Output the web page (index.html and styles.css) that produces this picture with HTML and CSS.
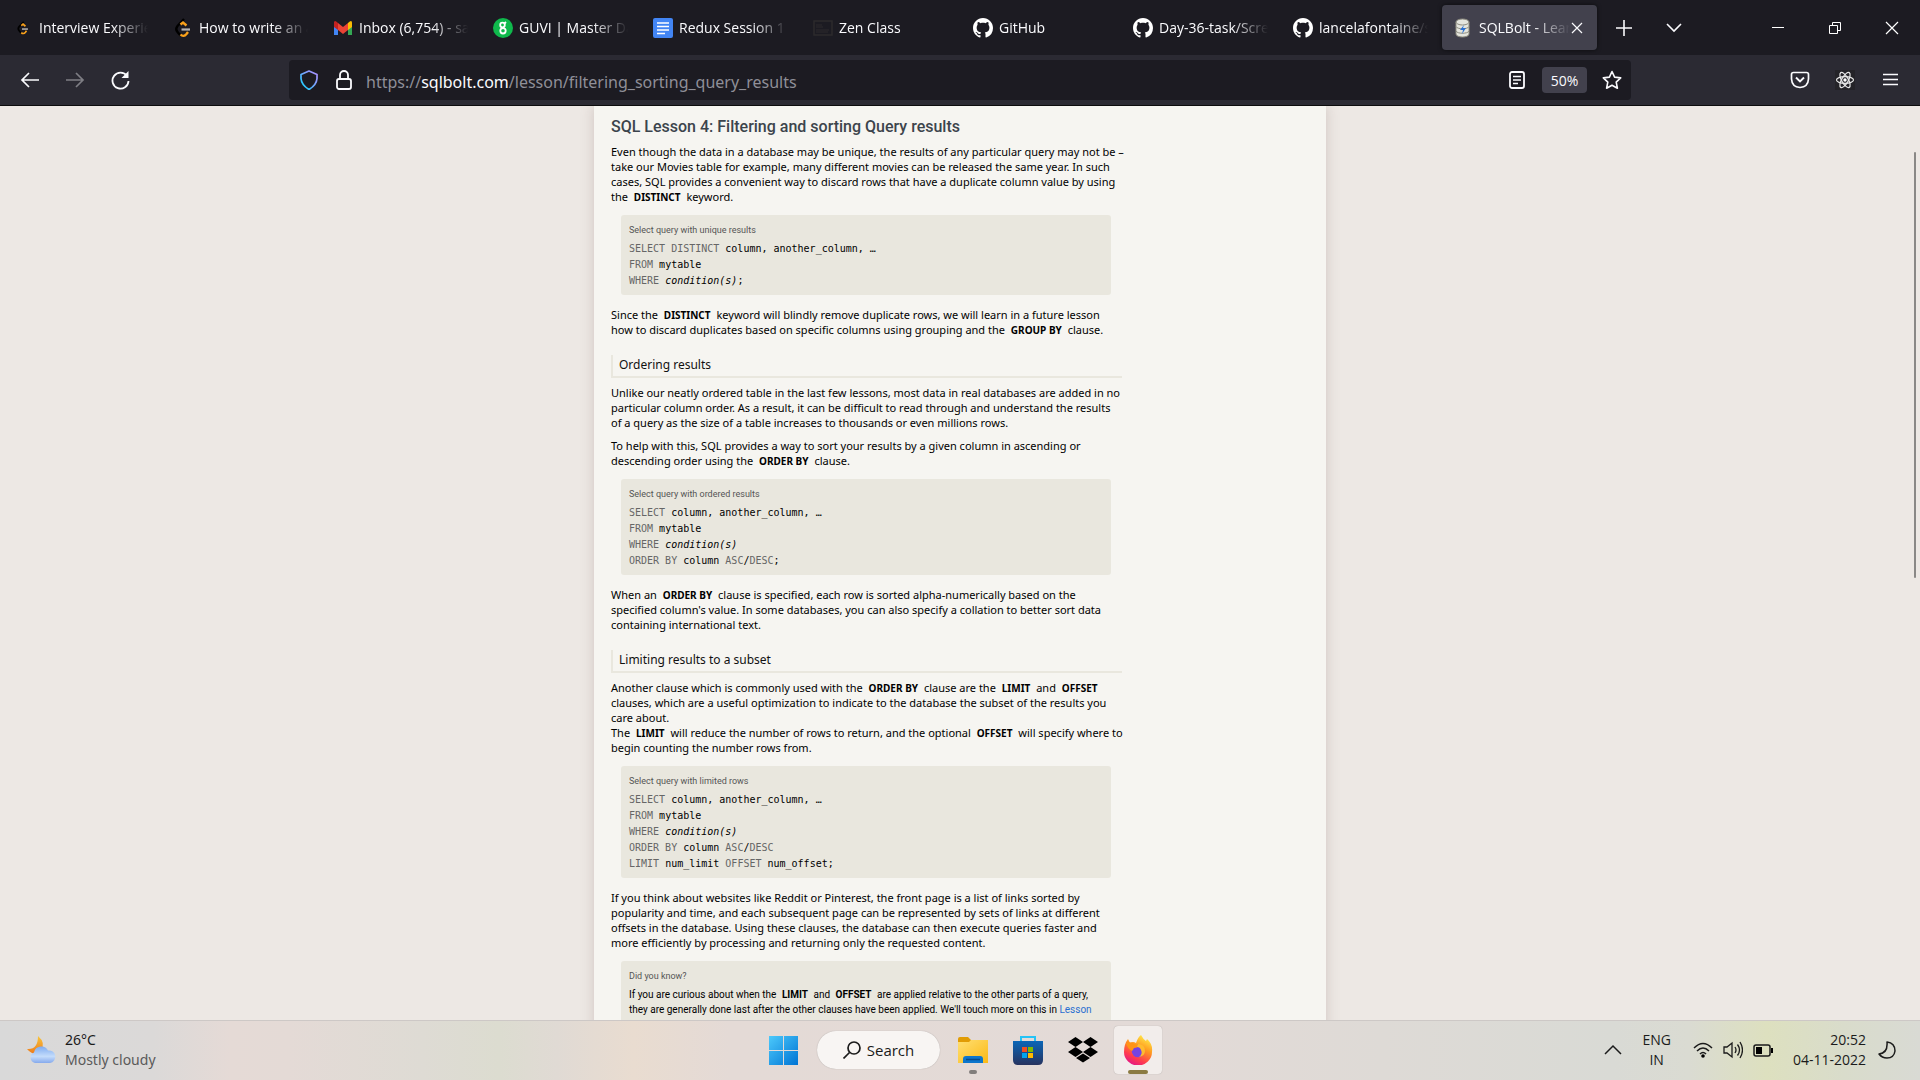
FILE: index.html
```html
<!DOCTYPE html>
<html lang="en">
<head>
<meta charset="utf-8">
<title>SQLBolt - Learn SQL</title>
<link rel="stylesheet" href="styles.css">
</head>
<body>
<svg class="defs" aria-hidden="true">
  <symbol id="leet" viewBox="0 0 20 20"><path d="M11 1 4.500 8q-2.500 3 0 6l3 3.500" fill="none" stroke="#000" stroke-width="2.400"/><path d="M7.500 6.500 10 4.500l3.500 3M7.500 16.500q3 3 6-.500l1.500-2" fill="none" stroke="#f9a11b" stroke-width="2.400"/><path d="M8.500 11.500H17" stroke="#b3b3b3" stroke-width="2.200"/></symbol>
  <symbol id="github" viewBox="0 0 16 16"><path fill="#fff" d="M8 0C3.580 0 0 3.580 0 8c0 3.540 2.290 6.530 5.470 7.590.4.070.55-.17.55-.38 0-.19-.01-.82-.01-1.490-2.010.37-2.530-.49-2.690-.94-.09-.23-.48-.94-.82-1.130-.28-.15-.68-.52-.01-.53.63-.01 1.080.58 1.230.82.72 1.210 1.870.87 2.330.66.07-.52.28-.87.51-1.070-1.780-.2-3.640-.89-3.640-3.950 0-.87.31-1.590.82-2.150-.08-.2-.36-1.020.08-2.120 0 0 .67-.21 2.200.82.64-.18 1.320-.27 2-.27s1.360.09 2 .27c1.530-1.040 2.200-.82 2.200-.82.44 1.100.16 1.920.08 2.120.51.56.82 1.270.82 2.150 0 3.070-1.870 3.750-3.650 3.950.29.25.54.73.54 1.480 0 1.070-.01 1.930-.01 2.200 0 .21.15.46.55.38A8.010 8.010 0 0 0 16 8c0-4.420-3.580-8-8-8z"/></symbol>
</svg>

<header class="browser">
  <div class="tabstrip">
    <nav class="tabs" aria-label="Tabs">
      <button class="tab"><svg class="fav small"><use href="#leet"/></svg><span class="tab-title">Interview Experience</span></button>
      <button class="tab"><svg class="fav"><use href="#leet"/></svg><span class="tab-title">How to write an article</span></button>
      <button class="tab"><svg class="fav" viewBox="0 0 20 20"><path fill="#4285f4" d="M1 4v13h4V7z"/><path fill="#34a853" d="M19 4v13h-4V7z"/><path fill="#fbbc04" d="M15 5q4-4 4 0v4l-4 3z"/><path fill="#c5221f" d="M5 5Q1 1 1 5v4l4 3z"/><path fill="#ea4335" d="m5 5 5 4 5-4v7l-5 4-5-4z"/></svg><span class="tab-title">Inbox (6,754) - samplemail</span></button>
      <button class="tab"><svg class="fav" viewBox="0 0 20 20"><circle cx="10" cy="10" r="10" fill="#0fb94c"/><g fill="none" stroke="#fff" stroke-width="1.800"><circle cx="9.500" cy="7" r="2.300"/><circle cx="10" cy="12.800" r="2.700"/><path d="m11 6 2-2"/></g></svg><span class="tab-title">GUVI | Master Data</span></button>
      <button class="tab"><svg class="fav" viewBox="0 0 20 20"><rect width="20" height="20" rx="2" fill="#4285f4"/><path d="M4 5h12M4 8.500h12M4 12h12M4 15.500h8" stroke="#fff" stroke-width="1.700"/></svg><span class="tab-title">Redux Session 1 -</span></button>
      <button class="tab"><svg class="fav" viewBox="0 0 20 20"><rect x="1" y="3" width="18" height="14" fill="none" stroke="#2c2b2d" stroke-width="1.500"/><path d="M3 7h6M3 12h13M3 9h7M3 14h12" stroke="#2c2b2d" stroke-width="1"/></svg><span class="tab-title">Zen Class</span></button>
      <button class="tab"><svg class="fav"><use href="#github"/></svg><span class="tab-title">GitHub</span></button>
      <button class="tab"><svg class="fav"><use href="#github"/></svg><span class="tab-title">Day-36-task/Screens</span></button>
      <button class="tab"><svg class="fav"><use href="#github"/></svg><span class="tab-title">lancelafontaine/sql</span></button>
      <button class="tab active"><svg class="fav" viewBox="0 0 20 20"><g fill="#e4e5de" stroke="#8d8c80"><path d="M3 4v12c0 4 13 4 13 0V4"/><ellipse cx="9.500" cy="4" rx="6.500" ry="3"/><path d="M3 8.500c1 3 12 3 13 0M3 13c1 3 12 3 13 0" fill="none"/></g><path d="m11 7-4 5h3l-1 4 4-6h-3z" fill="#2a6fd0"/></svg><span class="tab-title">SQLBolt - Learn SQL</span><svg class="close" viewBox="0 0 12 12"><path d="m1 1 10 10M11 1 1 11" stroke="#fbfbfe" stroke-width="1.200"/></svg></button>
    </nav>
    <button class="icon-btn" aria-label="New tab"><svg width="16" height="16"><path d="M8 0v16M0 8h16" stroke="#fbfbfe" stroke-width="1.600"/></svg></button>
    <button class="icon-btn" aria-label="List tabs"><svg width="16" height="16"><path d="m1 4 7 7 7-7" fill="none" stroke="#fbfbfe" stroke-width="1.600"/></svg></button>
    <div class="window-controls">
      <button class="icon-btn" aria-label="Minimize"><svg width="14" height="14"><path d="M1 6.500h12" stroke="#fff"/></svg></button>
      <button class="icon-btn" aria-label="Restore"><svg width="14" height="14"><path d="M1.500 4.500h8v8h-8zM4.500 4V1.500h8v8H10" fill="none" stroke="#fff"/></svg></button>
      <button class="icon-btn" aria-label="Close"><svg width="14" height="14"><path d="m1 1 12 12M13 1 1 13" stroke="#fff" stroke-width="1.200"/></svg></button>
    </div>
  </div>
  <div class="toolbar">
    <div class="nav-buttons">
      <button class="icon-btn" aria-label="Back"><svg width="20" height="20"><path d="M19 10H2M9 3l-7 7 7 7" fill="none" stroke="#fbfbfe" stroke-width="1.700"/></svg></button>
      <button class="icon-btn dim" aria-label="Forward"><svg width="20" height="20"><path d="M1 10h17M11 3l7 7-7 7" fill="none" stroke="#fbfbfe" stroke-width="1.700"/></svg></button>
      <button class="icon-btn" aria-label="Reload"><svg width="20" height="20"><path d="M17 6a8 8 0 1 0 1.500 5" fill="none" stroke="#fbfbfe" stroke-width="1.800"/><path d="M18.500 1v7h-7z" fill="#fbfbfe"/></svg></button>
    </div>
    <div class="urlbar">
      <svg width="20" height="20"><defs><linearGradient id="sh" x1="1" y1="0" x2="0" y2="1"><stop offset="0" stop-color="#b18cff"/><stop offset=".5" stop-color="#6fa8ff"/><stop offset="1" stop-color="#00ddff"/></linearGradient></defs><path d="m10 1 8 3.500v4Q17.500 15 10 19.500 2.500 15 2 8.500v-4z" fill="none" stroke="url(#sh)" stroke-width="1.700" stroke-linejoin="round"/></svg>
      <svg width="20" height="20"><rect x="3" y="9" width="14" height="10" rx="2" fill="none" stroke="#fbfbfe" stroke-width="1.800"/><path d="M6 9V5a4 4 0 0 1 8 0v4" fill="none" stroke="#fbfbfe" stroke-width="1.800"/></svg>
      <div class="url" role="textbox" contenteditable="true" spellcheck="false" aria-label="Address">https://<span class="host">sqlbolt.com</span>/lesson/filtering_sorting_query_results</div>
      <button class="icon-btn" aria-label="Reader view"><svg width="20" height="20"><rect x="3" y="2" width="14" height="16" rx="2" fill="none" stroke="#fbfbfe" stroke-width="1.800"/><path d="M6 6.500h8M6 10h8M6 13.500h5" stroke="#fbfbfe" stroke-width="1.400"/></svg></button>
      <button class="zoom">50%</button>
      <button class="icon-btn" aria-label="Bookmark"><svg width="20" height="20"><path d="m10 1.500 2.600 5.600 6.100.8-4.500 4.200 1.200 6.100-5.400-3-5.400 3 1.200-6.100L1.300 7.900l6.100-.8z" fill="none" stroke="#fbfbfe" stroke-width="1.600" stroke-linejoin="round"/></svg></button>
    </div>
    <div class="extensions">
      <button class="icon-btn" aria-label="Pocket"><svg width="20" height="20"><path d="M3.500 2.500h13q2 0 2 2V9q-.5 8-8.500 8.500Q2 17 1.500 9V4.500q0-2 2-2z" fill="none" stroke="#fbfbfe" stroke-width="1.700"/><path d="m6 7.500 4 4 4-4" fill="none" stroke="#fbfbfe" stroke-width="1.900"/></svg></button>
      <button class="icon-btn" aria-label="React Developer Tools"><svg width="20" height="20"><rect width="20" height="20" fill="#242328"/><g fill="none" stroke="#e8e8e8" stroke-width="1.200"><ellipse cx="10" cy="10" rx="8.500" ry="3.300"/><ellipse cx="10" cy="10" rx="8.500" ry="3.300" transform="rotate(60 10 10)"/><ellipse cx="10" cy="10" rx="8.500" ry="3.300" transform="rotate(120 10 10)"/></g><circle cx="10" cy="10" r="1.700" fill="#fff"/></svg></button>
      <button class="icon-btn" aria-label="Menu"><svg width="20" height="20"><path d="M3 4.500h15M3 9.500h15M3 14.500h15" stroke="#fbfbfe" stroke-width="1.600"/></svg></button>
    </div>
  </div>
</header>

<main class="viewport">
  <div class="page">
    <article class="lesson">
      <h1>SQL Lesson 4: Filtering and sorting Query results</h1>
      <p>Even though the data in a database may be unique, the results of any particular query may not be –<br>take our Movies table for example, many different movies can be released the same year. In such<br>cases, SQL provides a convenient way to discard rows that have a duplicate column value by using<br>the <code>DISTINCT</code> keyword.</p>
      <section class="box">
        <h3>Select query with unique results</h3>
        <pre><b>SELECT DISTINCT</b> column, another_column, …
<b>FROM</b> mytable
<b>WHERE</b> <i>condition(s)</i>;</pre>
      </section>
      <p>Since the <code>DISTINCT</code> keyword will blindly remove duplicate rows, we will learn in a future lesson<br>how to discard duplicates based on specific columns using grouping and the <code>GROUP BY</code> clause.</p>
      <h2>Ordering results</h2>
      <p>Unlike our neatly ordered table in the last few lessons, most data in real databases are added in no<br>particular column order. As a result, it can be difficult to read through and understand the results<br>of a query as the size of a table increases to thousands or even millions rows.</p>
      <p>To help with this, SQL provides a way to sort your results by a given column in ascending or<br>descending order using the <code>ORDER BY</code> clause.</p>
      <section class="box">
        <h3>Select query with ordered results</h3>
        <pre><b>SELECT</b> column, another_column, …
<b>FROM</b> mytable
<b>WHERE</b> <i>condition(s)</i>
<b>ORDER BY</b> column <b>ASC</b>/<b>DESC</b>;</pre>
      </section>
      <p>When an <code>ORDER BY</code> clause is specified, each row is sorted alpha-numerically based on the<br>specified column's value. In some databases, you can also specify a collation to better sort data<br>containing international text.</p>
      <h2>Limiting results to a subset</h2>
      <p>Another clause which is commonly used with the <code>ORDER BY</code> clause are the <code>LIMIT</code> and <code>OFFSET</code><br>clauses, which are a useful optimization to indicate to the database the subset of the results you<br>care about.<br>The <code>LIMIT</code> will reduce the number of rows to return, and the optional <code>OFFSET</code> will specify where to<br>begin counting the number rows from.</p>
      <section class="box">
        <h3>Select query with limited rows</h3>
        <pre><b>SELECT</b> column, another_column, …
<b>FROM</b> mytable
<b>WHERE</b> <i>condition(s)</i>
<b>ORDER BY</b> column <b>ASC</b>/<b>DESC</b>
<b>LIMIT</b> num_limit <b>OFFSET</b> num_offset;</pre>
      </section>
      <p>If you think about websites like Reddit or Pinterest, the front page is a list of links sorted by<br>popularity and time, and each subsequent page can be represented by sets of links at different<br>offsets in the database. Using these clauses, the database can then execute queries faster and<br>more efficiently by processing and returning only the requested content.</p>
      <section class="box note">
        <h3>Did you know?</h3>
        <p>If you are curious about when the <code>LIMIT</code> and <code>OFFSET</code> are applied relative to the other parts of a query,<br>they are generally done last after the other clauses have been applied. We'll touch more on this in <a href="#">Lesson</a></p>
      </section>
    </article>
  </div>
  <div class="scroll-thumb"></div>
</main>

<footer class="taskbar">
  <button class="weather">
    <svg width="32" height="32" viewBox="0 0 32 32"><defs><linearGradient id="mo" x1="0" y1="0" x2="0" y2="1"><stop offset="0" stop-color="#f8c63c"/><stop offset="1" stop-color="#ee7b1c"/></linearGradient><linearGradient id="cl" x1="0" y1="0" x2="0" y2="1"><stop offset="0" stop-color="#7facf0"/><stop offset=".6" stop-color="#c4dcfb"/><stop offset="1" stop-color="#86aaec"/></linearGradient></defs><path d="M13 2q8 7 3 14-6 8-14-1 11 1 11-13z" fill="url(#mo)"/><path d="M10 29a5.500 5.500 0 0 1-1-10.500 7.500 7.500 0 0 1 14-2A6.300 6.300 0 0 1 25 29z" fill="url(#cl)"/></svg>
    <span class="weather-text"><span>26°C</span><span class="muted">Mostly cloudy</span></span>
  </button>
  <div class="apps">
    <button class="app" aria-label="Start"><svg width="30" height="30"><defs><linearGradient id="wi" x1="0" y1="0" x2="1" y2="1" gradientUnits="objectBoundingBox"><stop offset="0" stop-color="#4cc9fb"/><stop offset="1" stop-color="#0074d4"/></linearGradient></defs><path d="M0 1h14v14H0zM15 1h14v14H15zM0 16h14v14H0zM15 16h14v14H15z" fill="url(#wi)"/></svg></button>
    <button class="search"><svg width="18" height="18"><circle cx="11" cy="7" r="6" fill="none" stroke="#1b1b1b" stroke-width="1.700"/><path d="m6.500 11.500-6 6" stroke="#1b1b1b" stroke-width="1.700"/></svg>Search</button>
    <button class="app running" aria-label="File Explorer"><svg width="30" height="30"><defs><linearGradient id="fo" x1="0" y1="0" x2="1" y2="1"><stop offset="0" stop-color="#ffdf72"/><stop offset="1" stop-color="#fbb915"/></linearGradient></defs><path d="M0 8V4q0-2 2-2h8l3 3h15q2 0 2 2v3H0z" fill="#e19c05"/><path d="M0 7h11l2-2h17v23H0z" fill="url(#fo)"/><path d="M5 28v-4q0-3 3-3h14q3 0 3 3v4z" fill="#0d76cc"/><path d="M8 24.500h14" stroke="#064b8c" stroke-width="1.500"/></svg></button>
    <button class="app" aria-label="Microsoft Store"><svg width="30" height="30"><defs><linearGradient id="st" x1="0" y1="0" x2="0" y2="1"><stop offset="0" stop-color="#0b66b7"/><stop offset="1" stop-color="#27335f"/></linearGradient></defs><path d="M0 6h30v19q0 5-5 5H5q-5 0-5-5z" fill="url(#st)"/><path d="M8 6V2h14v4" fill="none" stroke="#25c3f6" stroke-width="2"/><path d="M9 12h5v5H9z" fill="#f25022"/><path d="M15 12h5v5h-5z" fill="#7fba00"/><path d="M9 18h5v5H9z" fill="#00a4ef"/><path d="M15 18h5v5h-5z" fill="#ffb900"/></svg></button>
    <button class="app" aria-label="Dropbox"><svg width="30" height="30"><path d="m7.500 2 7.500 5-7.500 5L0 7zM22.500 2 30 7l-7.500 5L15 7zM7.500 12l7.500 5-7.500 5L0 17zM22.500 12l7.500 5-7.500 5-7.500-5zM15 18.500l7 4.500-7 4.500L8 23z"/></svg></button>
    <button class="app running current" aria-label="Firefox"><svg width="30" height="30" viewBox="0 0 30 30"><defs><linearGradient id="ff" x1=".8" y1="0" x2=".3" y2="1"><stop offset="0" stop-color="#fff44f"/><stop offset=".4" stop-color="#ff9a1f"/><stop offset=".75" stop-color="#ff3b4e"/><stop offset="1" stop-color="#e31587"/></linearGradient></defs><path d="M18 0q2 4 5 6l1-2q6 5 5 13a14 13.500 0 0 1-28 0Q1 9 5 4l2 4q3-2 6 0 2-6 5-8z" fill="url(#ff)"/><circle cx="15" cy="16" r="6.300" fill="#7543e3"/><path d="M3 8q5-2 8 1l5 1q-1 3-5 3-1 2-2 3-5-3-6-8z" fill="#ff9416"/><path d="M15 9q7 0 7 7 0 5-6 6 4-3 2-7-1-3-4-3z" fill="#ffbb2e"/></svg></button>
  </div>
  <div class="tray">
    <button class="icon-btn" aria-label="Hidden icons"><svg width="18" height="18"><path d="m1 13 8-8 8 8" fill="none" stroke="#1b1b1b" stroke-width="1.500"/></svg></button>
    <button class="lang"><span>ENG</span><span>IN</span></button>
    <button class="status" aria-label="Network, volume, battery">
      <svg width="20" height="18"><g fill="none" stroke="#1b1b1b" stroke-width="1.500"><path d="M1 7q9-9 18 0M4 10q6-6 12 0M7 13q3-3 6 0"/></g><circle cx="10" cy="15" r="1.800"/></svg>
      <svg width="20" height="18"><path d="M1 6h3l5-4v14l-5-4H1z" fill="none" stroke="#1b1b1b" stroke-width="1.300"/><path d="M12 6q2 3 0 6M14.500 3.500q4 5.500 0 11M17 1q5 8 0 16" fill="none" stroke="#1b1b1b" stroke-width="1.300"/></svg>
      <svg width="20" height="18"><rect x="1" y="4" width="16" height="11" rx="2" fill="none" stroke="#1b1b1b" stroke-width="1.500"/><path d="M3 6h6v7H3zM18 7h2v5h-2z"/></svg>
    </button>
    <button class="clock"><span>20:52</span><span>04-11-2022</span></button>
    <button class="icon-btn" aria-label="Focus"><svg width="18" height="18"><path d="M9 1q8 1 8 9-1 7-8 7-5 0-8-4 9-1 8-12z" fill="none" stroke="#1b1b1b" stroke-width="1.500" stroke-linejoin="round"/></svg></button>
  </div>
</footer>
</body>
</html>
```
FILE: styles.css
```css
* { box-sizing: border-box; }
body { margin: 0; height: 100vh; display: flex; flex-direction: column; overflow: hidden; background: #ede8e4; font-family: "Open Sans", "Noto Sans", sans-serif; }
button { margin: 0; padding: 0; border: 0; background: none; color: inherit; font: inherit; cursor: pointer; }
svg { display: block; flex: none; }
.defs { position: absolute; width: 0; height: 0; }
.icon-btn { display: flex; align-items: center; justify-content: center; }

/* Browser chrome */
.browser { flex: none; border-bottom: 1px solid #0c0c0d; color: #fbfbfe; background: #2b2a33; }
.tabstrip { display: flex; align-items: center; height: 55px; background: #1c1b22; }
.tabs { display: flex; gap: 4px; margin-right: 19px; }
.tab { display: flex; align-items: center; gap: 6px; width: 156px; height: 45px; padding: 0 8px 0 13px; border-radius: 4px; font-size: 14px; text-align: left; }
.tab.active { background: #42414d; margin-left: 2px; width: 155px; padding: 0 14px 0 11px; box-shadow: 0 0 4px rgba(0, 0, 0, .6); }
.tab-title { flex: 1; overflow: hidden; white-space: nowrap; -webkit-mask-image: linear-gradient(to left, transparent, #000 36px); mask-image: linear-gradient(to left, transparent, #000 36px); }
.fav { width: 20px; height: 20px; }
.fav.small { height: 14px; }
.close { width: 12px; height: 12px; margin-left: -5px; }
.tabstrip > .icon-btn { width: 16px; margin-right: 34px; }
.window-controls { display: flex; gap: 43px; margin: 0 21px 0 auto; }
.toolbar { display: flex; align-items: center; height: 50px; padding: 0 20px; }
.nav-buttons { display: flex; gap: 25px; width: 269px; }
.dim { opacity: .4; }
.urlbar { display: flex; align-items: center; width: 1342px; height: 40px; padding: 0 9px 0 10px; border-radius: 4px; background: #1c1b22; gap: 15px; }
.url { flex: 1; margin-left: -3px; padding-top: 3px; font-family: "Noto Sans", sans-serif; font-size: 16px; color: #8f8f98; white-space: nowrap; outline: 0; }
.host { color: #fbfbfe; }
.zoom { width: 45px; height: 26px; border-radius: 4px; background: #42414d; font-size: 14px; }
.extensions { display: flex; gap: 25px; margin-left: auto; }

/* Lesson page */
.viewport { flex: 1; min-height: 0; position: relative; overflow: hidden; }
.page { width: 732px; min-height: 100%; margin: 0 auto; padding: 11px 17px; background: #f6f5f1; box-shadow: 0 0 12px rgba(120, 90, 90, .25); }
.lesson { width: 511px; font-family: "Noto Sans", sans-serif; font-size: 11px; line-height: 15px; color: #000; white-space: nowrap; }
.lesson p { margin: 8px 0 0; }
.lesson h1 { margin: 0 0 7px; font-family: Roboto, sans-serif; font-size: 15px; line-height: 20px; font-weight: 600; color: #3c444c; }
.lesson h1 { font-size: 16px; font-weight: 500; }
.lesson h1 + p { margin-top: 0; }
.lesson h2 { margin: 18px 0 0; height: 23px; padding-left: 6px; border: solid #e9e7de; border-width: 0 0 2px 2px; font-size: 12px; line-height: 20px; font-weight: 400; color: #111; }
.lesson h2 + p { margin-top: 7px; }
.lesson code { margin: 0 3px; font: bold 10px "Noto Sans", sans-serif; }
.box { margin: 11px 11px 12px 10px; padding: 8px 8px 6px; border-radius: 3px; background: #e9e7de; }
.box h3 { margin: 0 0 4px; font-family: Roboto, sans-serif; font-size: 9px; line-height: 14px; font-weight: 400; color: #555; }
.lesson .box + p { margin-top: 0; }
.box pre { margin: 0; font: 10px/16px "DejaVu Sans Mono", monospace; }
.box pre b { font-weight: 400; color: #666; }
.lesson .note p { margin: 0; font-family: Roboto, sans-serif; font-size: 10px; }
.note code { font-family: Roboto, sans-serif; }
.note a { color: #2a6fd0; text-decoration: none; }
.scroll-thumb { position: absolute; right: 4px; top: 46px; width: 2px; height: 426px; border-radius: 1px; background: #8a8886; }

/* Taskbar */
.taskbar { flex: none; display: grid; grid-template-columns: 1fr auto 1fr; align-items: center; height: 60px; padding: 0 0 1px 2px; border-top: 1px solid #cdc8c6; color: #1b1b1b; font-size: 14px; line-height: 20px;
  background: linear-gradient(90deg, #d9d9d9 0%, #dbd9d8 8%, #e5dad6 12%, #e4dad6 15%, #dedbd4 22%, #dcdcd0 26%, #e0dad4 29%, #e9dcd0 33%, #e4dad6 38%, #e3dad7 60%, #dedad6 72%, #d9dad5 84%, #dadbd2 88%, #dde0bf 92%, #d9dccb 96%, #d9dad4 100%); }
.weather { display: flex; align-items: center; gap: 8px; margin-left: 23px; justify-self: start; }
.weather-text { display: flex; flex-direction: column; text-align: left; font-family: "Noto Sans", sans-serif; }
.muted { color: #5a5a5a; }
.apps { display: flex; align-items: center; gap: 7px; }
.app { position: relative; width: 48px; height: 48px; display: grid; place-items: center; border-radius: 4px; }
.search { display: flex; align-items: center; justify-content: center; gap: 6px; width: 123px; height: 38px; margin: 0 2px; border-radius: 19px; background: #f8f5f3; font-size: 15px; box-shadow: 0 0 1px rgba(0, 0, 0, .3); }
.running::after { content: ""; position: absolute; bottom: 0; left: 20px; width: 8px; height: 4px; border-radius: 2px; background: #827e7c; }
.current { background: #f2edeb; box-shadow: 0 0 1px rgba(0, 0, 0, .3); }
.current::after { left: 14px; width: 20px; background: #8b7a42; }
.tray { display: flex; align-items: center; justify-self: end; margin-right: 24px; }
.lang { display: flex; flex-direction: column; align-items: center; margin: 0 22px 0 20px; }
.status { display: flex; gap: 10px; }
.clock { display: flex; flex-direction: column; align-items: flex-end; margin: 0 12px 0 20px; }
```
